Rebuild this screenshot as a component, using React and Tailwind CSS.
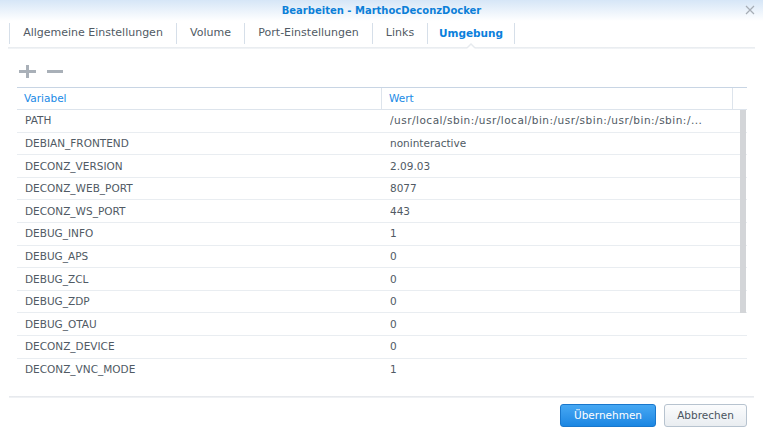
const tabs = [
  ['Allgemeine Einstellungen', 'w-[167px]'],
  ['Volume', 'w-[68px]'],
  ['Port-Einstellungen', 'w-[128px]'],
  ['Links', 'w-[55px]'],
  ['Umgebung', 'w-[88px]'],
]

const rows = [
  ['PATH', '/usr/local/sbin:/usr/local/bin:/usr/sbin:/usr/bin:/sbin:/...'],
  ['DEBIAN_FRONTEND', 'noninteractive'],
  ['DECONZ_VERSION', '2.09.03'],
  ['DECONZ_WEB_PORT', '8077'],
  ['DECONZ_WS_PORT', '443'],
  ['DEBUG_INFO', '1'],
  ['DEBUG_APS', '0'],
  ['DEBUG_ZCL', '0'],
  ['DEBUG_ZDP', '0'],
  ['DEBUG_OTAU', '0'],
  ['DECONZ_DEVICE', '0'],
  ['DECONZ_VNC_MODE', '1'],
]

export default function App() {
  return (
    <div className="relative w-[763px] h-[430px] overflow-hidden bg-white text-[10.5px] text-[#505a64]" style={{ fontFamily: '"DejaVu Sans", Verdana, sans-serif' }}>
      {/* title bar */}
      <div className="relative h-[21px] bg-gradient-to-b from-[#d6e6f7] to-white flex items-center justify-center">
        <span className="font-bold text-[#0c7fd8] text-[10px] mt-[-1px]">Bearbeiten - MarthocDeconzDocker</span>
        <svg className="absolute right-[8px] top-[5px] w-[10px] h-[10px]" viewBox="0 0 10 10">
          <path d="M1 1L9 9M9 1L1 9" stroke="#a6adb5" strokeWidth="1.2" />
        </svg>
      </div>

      {/* tabs */}
      <div className="flex h-[21px] mt-[2px] ml-[9px] text-[11px]">
        {tabs.map(([t, w], i) => (
          <div key={t} className={`${w} flex items-center justify-center border-l border-[#d6dfe9] ${i === tabs.length - 1 ? 'border-r font-bold text-[#0a80dc] text-[10.5px]' : ''}`}>
            {t}
          </div>
        ))}
      </div>
      <div className="relative mx-[8px] mt-[3px] h-[2px] bg-gradient-to-b from-[#e6eaee] to-[#f4f6f8]">
        <div className="absolute left-[458px] top-[-4px] w-0 h-0 border-l-[5px] border-r-[5px] border-b-[5px] border-l-transparent border-r-transparent border-b-[#e6eaee]" />
        <div className="absolute left-[459px] top-[-2px] w-0 h-0 border-l-[4px] border-r-[4px] border-b-[4px] border-l-transparent border-r-transparent border-b-white" />
      </div>

      {/* toolbar */}
      <div className="flex items-center gap-[11px] ml-[19px] mt-[15px] h-[14px]">
        <svg className="w-[17px] h-[13px]" viewBox="0 0 17 13">
          <path d="M0 6.5H17M8.5 0V13" stroke="#a9b0b8" strokeWidth="3" />
        </svg>
        <svg className="w-[16px] h-[13px]" viewBox="0 0 16 13">
          <path d="M0 6.5H16" stroke="#a9b0b8" strokeWidth="3" />
        </svg>
      </div>

      {/* grid */}
      <div className="mx-[17px] mt-[9px] w-[730px] border-t border-[#c8d5e4]">
        <div className="flex h-[22px] border-b border-[#dde4ec] text-[#1a8ae6]">
          <div className="w-[365px] pl-[7px] pt-[1px] flex items-center border-r border-[#dde4ec]">Variabel</div>
          <div className="w-[351px] pl-[7px] pt-[1px] flex items-center border-r border-[#dde4ec]">Wert</div>
          <div className="flex-1" />
        </div>
        <div className="relative h-[285px] overflow-hidden">
          {rows.map(([k, v], i) => (
            <div key={k} className={`flex h-[22.6px] pt-[1px] ${i < rows.length - 1 ? 'border-b border-[#e9edf1]' : ''}`}>
              <div className="w-[365px] pl-[8px] flex items-center">{k}</div>
              <div className="w-[343px] pl-[8px] flex items-center">
                <span className={`truncate ${i === 0 ? 'tracking-[0.5px]' : ''}`}>{v}</span>
              </div>
            </div>
          ))}
          <div className="absolute right-[1px] top-0 w-[6px] h-[203px] bg-[#d3d5d8]" />
        </div>
      </div>

      {/* footer */}
      <div className="mx-[9px] mt-[1px] h-[2px] bg-gradient-to-b from-[#e3e6ea] to-[#f3f5f7]" />
      <div className="flex justify-end gap-[8px] mr-[16px] mt-[6px]">
        <button className="w-[96px] h-[23px] flex items-center justify-center rounded-[3px] border border-[#1977cc] bg-gradient-to-b from-[#46a8f3] to-[#1a86e2] text-white text-[10.5px]">Übernehmen</button>
        <button className="w-[83px] h-[23px] flex items-center justify-center rounded-[3px] border border-[#b7c3cf] bg-gradient-to-b from-[#fbfcfd] to-[#e9edf1] text-[#4a545e] text-[10.5px]">Abbrechen</button>
      </div>
    </div>
  )
}
